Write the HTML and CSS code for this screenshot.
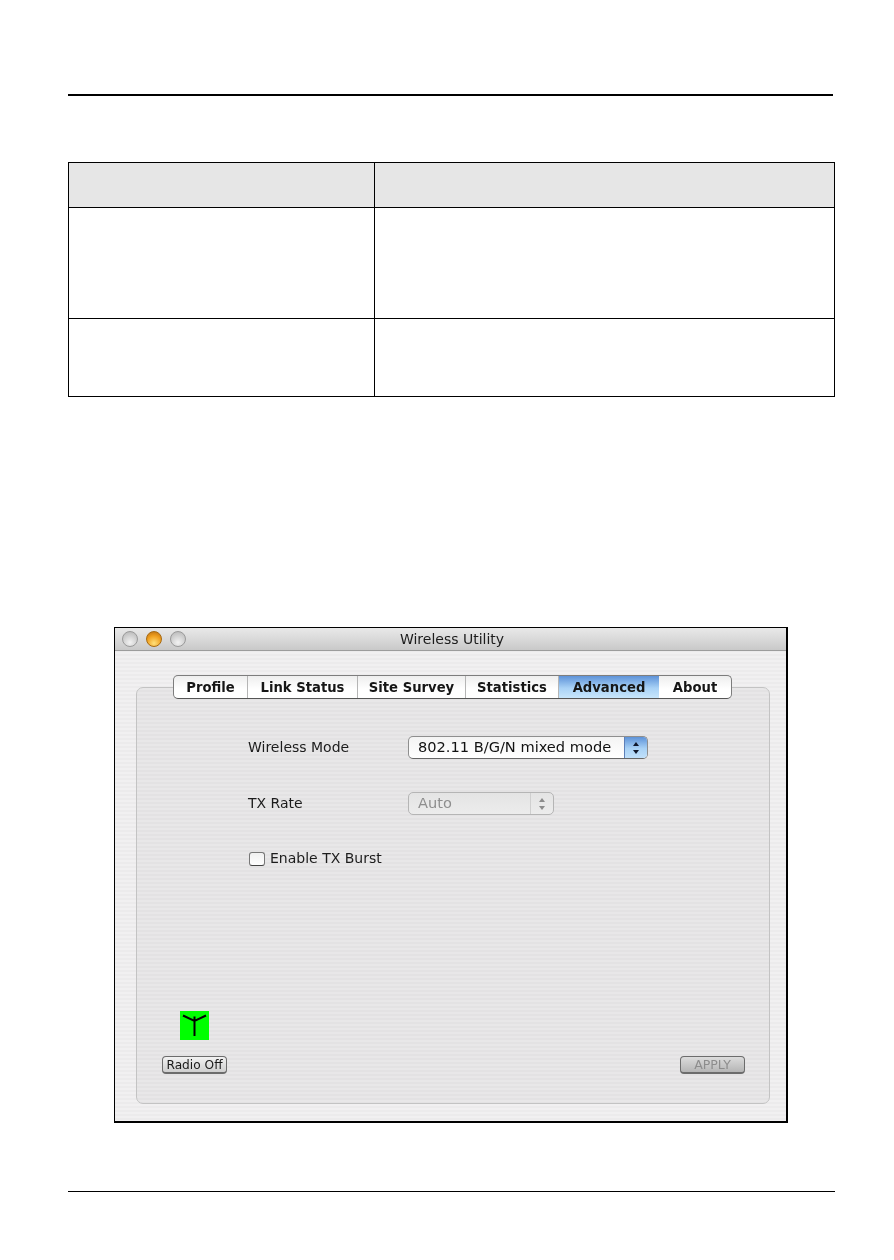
FILE: index.html
```html
<!DOCTYPE html>
<html>
<head>
    <title>Wireless Utility</title>
    <link rel="stylesheet" href="styles.css">
</head>
<body>
    <div class="page">
        <div class="top-rule"></div>

        <table class="doc-table">
            <tr class="head-row"><th class="col-a"></th><th></th></tr>
            <tr class="row-tall"><td></td><td></td></tr>
            <tr class="row-short"><td></td><td></td></tr>
        </table>

        <div class="window">
            <div class="titlebar">
                <div class="lights">
                    <span class="light"></span>
                    <span class="light light-on"></span>
                    <span class="light"></span>
                </div>
                <span class="title">Wireless Utility</span>
            </div>

            <div class="content">
                <div class="tabs">
                    <span class="tab tab-profile">Profile</span>
                    <span class="tab tab-link">Link Status</span>
                    <span class="tab tab-survey">Site Survey</span>
                    <span class="tab tab-stats">Statistics</span>
                    <span class="tab tab-adv">Advanced</span>
                    <span class="tab tab-about">About</span>
                </div>

                <div class="pane">
                    <div class="form-row row-mode">
                        <span class="label">Wireless Mode</span>
                        <div class="select select-mode">
                            <span class="select-text">802.11 B/G/N mixed mode</span>
                            <span class="stepper stepper-on">
                                <svg width="8" height="14" viewBox="0 0 8 14"><path d="M4 1 L7 5 L1 5 Z M4 13 L7 9 L1 9 Z" fill="#10182c"/></svg>
                            </span>
                        </div>
                    </div>
                    <div class="form-row row-rate">
                        <span class="label">TX Rate</span>
                        <div class="select select-rate">
                            <span class="select-text">Auto</span>
                            <span class="stepper">
                                <svg width="8" height="14" viewBox="0 0 8 14"><path d="M4 1 L7 5 L1 5 Z M4 13 L7 9 L1 9 Z" fill="#8b8b8b"/></svg>
                            </span>
                        </div>
                    </div>
                    <label class="check-row">
                        <span class="checkbox"></span>
                        <span class="label">Enable TX Burst</span>
                    </label>

                    <div class="pane-bottom">
                        <div class="radio-box">
                            <div class="antenna">
                                <svg width="29" height="29" viewBox="0 0 29 29">
                                    <path d="M14.5 5.5 V25 M3 4.5 L14.5 10 L26 4.5" fill="none" stroke="#000" stroke-width="2"/>
                                </svg>
                            </div>
                            <span class="btn btn-radio">Radio Off</span>
                        </div>
                        <span class="btn btn-apply">APPLY</span>
                    </div>
                </div>
            </div>
        </div>

        <div class="bottom-rule"></div>
    </div>
</body>
</html>
```

FILE: styles.css
```css
body { margin: 0; background: #fff; color: #000; font-family: "DejaVu Sans", sans-serif; }
.page { width: 835px; height: 1260px; padding: 94px 0 0 68px; box-sizing: border-box; overflow: hidden; }

.top-rule { width: 765px; height: 2px; background: #000; }
.bottom-rule { height: 1px; background: #000; margin-top: 68px; }

.doc-table {
    width: 767px;
    height: 235px;
    margin-top: 66px;
    border-collapse: collapse;
    table-layout: fixed;
}
.doc-table th, .doc-table td { border: 1px solid #000; padding: 0; }
.doc-table th { background: #e6e6e6; }
.col-a { width: 305px; }
.head-row { height: 45px; }
.row-tall { height: 111px; }
.row-short { height: 78px; }

/* app window */
.window {
    width: 674px;
    height: 496px;
    margin: 230px 0 0 46px;
    box-sizing: border-box;
    border: 1px solid #000;
    border-width: 1px 2px 2px 1px;
    background: repeating-linear-gradient(#f1f0f1 0, #f1f0f1 2px, #ecebec 2px, #ecebec 4px);
    display: flex;
    flex-direction: column;
}
.titlebar {
    height: 22px;
    flex: none;
    display: flex;
    align-items: center;
    justify-content: center;
    position: relative;
    background: linear-gradient(#e9e9e9, #c9c9c9);
    border-bottom: 1px solid #9c9c9c;
    filter: blur(0.3px);
}
.lights { position: absolute; left: 7px; top: 3px; display: flex; gap: 8px; }
.light {
    width: 14px;
    height: 14px;
    border-radius: 50%;
    border: 1px solid #9a9a9a;
    background: radial-gradient(circle at 50% 75%, #f2f2f2, #bdbdbd 85%);
}
.light-on {
    border-color: #a86a10;
    background: radial-gradient(circle at 50% 80%, #ffe07a, #f0a020 55%, #b86c10 100%);
}
.title { font-size: 14px; color: #1c1c1c; margin-left: 3px; }

.content { flex: 1; padding: 24px 16px 17px 21px; display: flex; flex-direction: column; filter: blur(0.3px); }
.tabs {
    display: flex;
    align-self: flex-start;
    margin-left: 37px;
    height: 24px;
    box-sizing: border-box;
    border: 1px solid #7d7d7d;
    border-bottom-color: #555;
    border-radius: 5px;
    background: linear-gradient(#eeeeee, #fff 60%);
    position: relative;
    z-index: 1;
}
.tab {
    display: flex;
    align-items: center;
    justify-content: center;
    box-sizing: border-box;
    font-size: 13.2px;
    font-weight: bold;
    color: #161616;
    border-right: 1px solid #b5b5b5;
}
.tab-profile { width: 74px; }
.tab-link { width: 110px; }
.tab-survey { width: 108px; }
.tab-stats { width: 93px; }
.tab-adv {
    width: 100px;
    border: 0;
    background: linear-gradient(#5d92d8, #a9d2f6 55%, #c8e6fb);
}
.tab-about { width: 72px; border: 0; }

.pane {
    flex: 1;
    margin-top: -12px;
    border: 1px solid #c3c3c3;
    border-radius: 7px;
    background: repeating-linear-gradient(#e8e7e8 0, #e8e7e8 2px, #e3e2e3 2px, #e3e2e3 4px);
    padding: 0 24px 29px 25px;
    display: flex;
    flex-direction: column;
    box-sizing: border-box;
}
.form-row { display: flex; align-items: center; margin-left: 86px; }
.row-mode { margin-top: 48px; }
.row-rate { margin-top: 33px; }
.label { font-size: 14px; color: #1c1c1c; padding-bottom: 2px; }
.form-row .label { width: 160px; flex: none; }

.select {
    height: 23px;
    box-sizing: border-box;
    border: 1px solid #8e8e8e;
    border-radius: 5px;
    display: flex;
    align-items: center;
    justify-content: space-between;
    font-size: 14.6px;
}
.select-mode { width: 240px; background: linear-gradient(#f4f4f4, #fff); color: #111; border-bottom-color: #666; }
.select-rate { width: 146px; background: linear-gradient(#e4e4e4, #ececec); color: #8e8e8e; border-color: #b5b5b5; }
.select-text { padding-left: 9px; padding-bottom: 2px; }
.stepper {
    width: 23px;
    height: 100%;
    display: flex;
    align-items: center;
    justify-content: center;
    border-left: 1px solid #cfcfcf;
    border-radius: 0 4px 4px 0;
    box-sizing: border-box;
}
.stepper-on {
    background: linear-gradient(#5d92d8, #a9d2f6 55%, #c0e0fa);
    border-left-color: #5d7fb8;
}

.check-row { display: flex; align-items: center; gap: 5px; margin: 35px 0 0 87px; }
.checkbox {
    width: 16px;
    height: 14px;
    box-sizing: border-box;
    border: 1px solid #777;
    border-bottom-color: #444;
    border-radius: 3px;
    background: linear-gradient(#f0f0f0, #fff);
}

.pane-bottom { margin-top: auto; display: flex; justify-content: space-between; align-items: flex-end; }
.radio-box { display: flex; flex-direction: column; align-items: center; gap: 16px; }
.antenna { width: 29px; height: 29px; background: #00ff00; }
.antenna svg { display: block; }
.btn {
    height: 18px;
    box-sizing: border-box;
    display: flex;
    align-items: center;
    justify-content: center;
    border: 1px solid #6c6c6c;
    border-bottom-width: 2px;
    border-radius: 4px;
    font-size: 12.2px;
    background: linear-gradient(#f2f2f2, #cfcfcf);
}
.btn-radio { width: 65px; color: #1a1a1a; }
.btn-apply { width: 65px; color: #8d8d8d; font-size: 12.5px; background: linear-gradient(#dcdcdc, #b5b5b5); }
```
